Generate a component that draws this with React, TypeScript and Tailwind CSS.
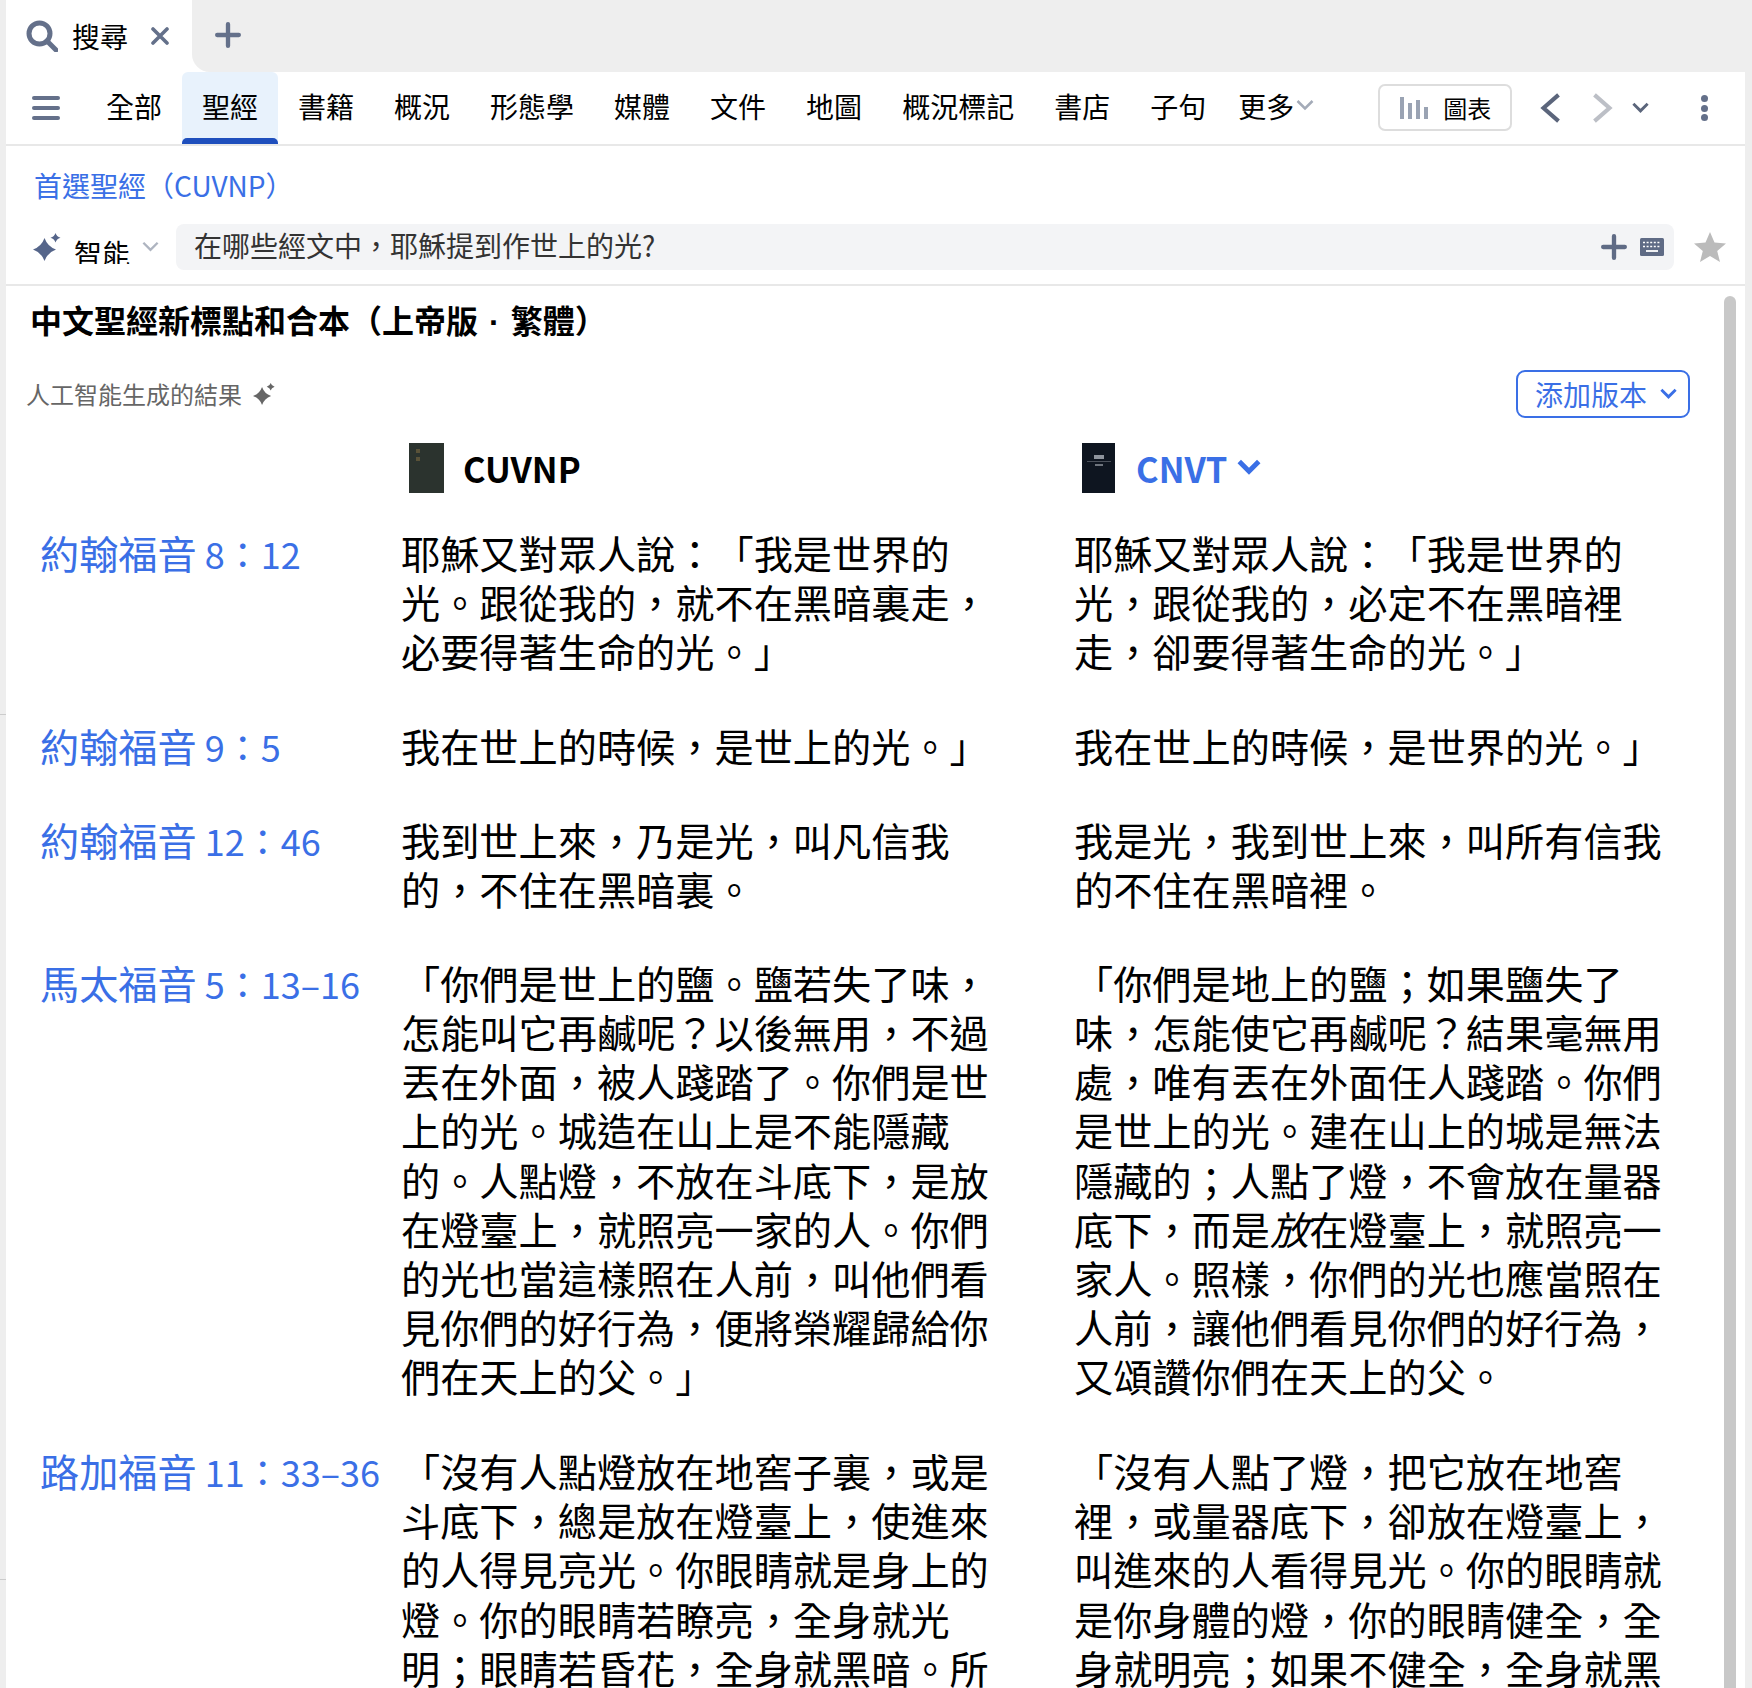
import React from "react";

const FONT = "[font-family:'Noto_Sans_CJK_TC','Noto_Sans',sans-serif] [text-spacing-trim:space-all]";

const Chevron = ({ className, dir = "down", sw = 2 }: { className: string; dir?: "down" | "left" | "right"; sw?: number }) => {
  const d = dir === "down" ? "M2 4 L8 10 L14 4" : dir === "left" ? "M12 1 L4 8 L12 15" : "M4 1 L12 8 L4 15";
  return (
    <svg viewBox="0 0 16 16" className={className} fill="none" stroke="currentColor" strokeWidth={sw}>
      <path d={d} />
    </svg>
  );
};

const Sparkle = ({ className }: { className: string }) => (
  <svg viewBox="0 0 28 28" className={className} fill="currentColor">
    <path d="M11.5 5 Q14.5 13.5 23 16.5 Q14.5 19.5 11.5 28 Q8.5 19.5 0 16.5 Q8.5 13.5 11.5 5Z" />
    <path d="M22.5 0 Q23.5 3.5 27.5 4.8 Q23.5 6 22.5 9.6 Q21.5 6 17.5 4.8 Q21.5 3.5 22.5 0Z" />
  </svg>
);

const Plus = ({ className }: { className: string }) => (
  <svg viewBox="0 0 24 24" className={className} stroke="currentColor" strokeWidth={4} strokeLinecap="round">
    <path d="M12 2V22M2 12H22" />
  </svg>
);

const NAV: [string, boolean?][] = [
  ["全部"],
  ["聖經", true],
  ["書籍"],
  ["概況"],
  ["形態學"],
  ["媒體"],
  ["文件"],
  ["地圖"],
  ["概況標記"],
  ["書店"],
  ["子句"],
];

type Row = { ref: string; num: string; top: string; a: string[]; b: string[] };
const ROWS: Row[] = [
  {
    ref: "約翰福音",
    num: "8：12",
    top: "mt-0",
    a: ["耶穌又對眾人說：「我是世界的", "光。跟從我的，就不在黑暗裏走，", "必要得著生命的光。」"],
    b: ["耶穌又對眾人說：「我是世界的", "光，跟從我的，必定不在黑暗裡", "走，卻要得著生命的光。」"],
  },
  {
    ref: "約翰福音",
    num: "9：5",
    top: "mt-[45px]",
    a: ["我在世上的時候，是世上的光。」"],
    b: ["我在世上的時候，是世界的光。」"],
  },
  {
    ref: "約翰福音",
    num: "12：46",
    top: "mt-[44px]",
    a: ["我到世上來，乃是光，叫凡信我", "的，不住在黑暗裏。"],
    b: ["我是光，我到世上來，叫所有信我", "的不住在黑暗裡。"],
  },
  {
    ref: "馬太福音",
    num: "5：13–16",
    top: "mt-[44.5px]",
    a: [
      "「你們是世上的鹽。鹽若失了味，",
      "怎能叫它再鹹呢？以後無用，不過",
      "丟在外面，被人踐踏了。你們是世",
      "上的光。城造在山上是不能隱藏",
      "的。人點燈，不放在斗底下，是放",
      "在燈臺上，就照亮一家的人。你們",
      "的光也當這樣照在人前，叫他們看",
      "見你們的好行為，便將榮耀歸給你",
      "們在天上的父。」",
    ],
    b: [
      "「你們是地上的鹽；如果鹽失了",
      "味，怎能使它再鹹呢？結果毫無用",
      "處，唯有丟在外面任人踐踏。你們",
      "是世上的光。建在山上的城是無法",
      "隱藏的；人點了燈，不會放在量器",
      "底下，而是*放*在燈臺上，就照亮一",
      "家人。照樣，你們的光也應當照在",
      "人前，讓他們看見你們的好行為，",
      "又頌讚你們在天上的父。",
    ],
  },
  {
    ref: "路加福音",
    num: "11：33–36",
    top: "mt-[45.5px]",
    a: [
      "「沒有人點燈放在地窖子裏，或是",
      "斗底下，總是放在燈臺上，使進來",
      "的人得見亮光。你眼睛就是身上的",
      "燈。你的眼睛若瞭亮，全身就光",
      "明；眼睛若昏花，全身就黑暗。所",
    ],
    b: [
      "「沒有人點了燈，把它放在地窖",
      "裡，或量器底下，卻放在燈臺上，",
      "叫進來的人看得見光。你的眼睛就",
      "是你身體的燈，你的眼睛健全，全",
      "身就明亮；如果不健全，全身就黑",
    ],
  },
];

const Lines = ({ lines }: { lines: string[] }) => (
  <div className="text-[39.2px] leading-[49.2px] text-black whitespace-nowrap">
    {lines.map((l) => (
      <div key={l}>{l.split("*").map((p, i) => (i % 2 ? <em key={i}>{p}</em> : p))}</div>
    ))}
  </div>
);

export default function App() {
  return (
    <div className={`${FONT} relative h-[1688px] w-[1752px] overflow-hidden bg-[#eeeeee] pl-[6px] pr-[7px] text-black`}>
      {/* tab strip */}
      <div className="flex h-[72px] bg-white rounded-tr-[10px]">
        <div className="flex w-[186px] items-center rounded-t-[20px] bg-white pl-[20px]">
          <svg viewBox="0 0 32 32" className="h-[32px] w-[32px] text-[#64708a]" fill="none" stroke="currentColor" strokeWidth={5}>
            <circle cx="13.5" cy="13.5" r="10.5" />
            <path d="M21 21L30 30" strokeLinecap="round" />
          </svg>
          <span className="ml-[14px] text-[28px] leading-none">搜尋</span>
          <svg viewBox="0 0 18 18" className="ml-[23px] h-[18px] w-[18px] text-[#64708a]" stroke="currentColor" strokeWidth={3.6}>
            <path d="M2 2L16 16M16 2L2 16" strokeLinecap="round" />
          </svg>
        </div>
        <div className="flex flex-1 items-center rounded-bl-[18px] bg-[#eeeeee] pl-[23px]">
          <Plus className="-mt-[2px] h-[26px] w-[26px] text-[#64708a]" />
        </div>
      </div>

      {/* nav row */}
      <div className="flex h-[74px] items-stretch border-b-2 border-[#e8e8e8] bg-white">
        <div className="flex w-[80px] items-center pl-[26px]">
          <div className="flex h-[24px] w-[28px] flex-col justify-between">
            <div className="h-[4px] rounded-full bg-[#64708a]" />
            <div className="h-[4px] rounded-full bg-[#64708a]" />
            <div className="h-[4px] rounded-full bg-[#64708a]" />
          </div>
        </div>
        {NAV.map(([t, on]) => (
          <div
            key={t}
            className={`relative flex items-center px-[20px] pb-[5px] text-[28px] leading-none ${on ? "rounded-t-[6px] bg-[#e8f2fc]" : ""}`}
          >
            {t}
            {on && <div className="absolute inset-x-0 bottom-0 h-[6px] rounded-t-[5px] bg-[#1f4fbd]" />}
          </div>
        ))}
        <div className="flex items-center pb-[4px] pl-[12px] text-[28px] leading-none">
          更多
          <Chevron className="ml-[1px] h-[20px] w-[20px] text-[#a4abb8]" />
        </div>
        <div className="ml-[63px] mt-[12px] flex h-[47px] w-[134px] items-center rounded-[7px] border-2 border-[#dddddd] pl-[20px]">
          <svg viewBox="0 0 28 22" className="h-[22px] w-[28px] text-[#9aa3b3]" fill="currentColor">
            <rect x="0" y="0" width="4" height="22" />
            <rect x="8" y="6" width="4" height="16" />
            <rect x="16" y="3" width="4" height="19" />
            <rect x="24" y="10" width="4" height="12" />
          </svg>
          <span className="ml-[15px] text-[24px] leading-none">圖表</span>
        </div>
        <div className="flex items-center">
          <Chevron dir="left" sw={2.2} className="ml-[24px] h-[30px] w-[30px] text-[#5b657b]" />
          <Chevron dir="right" sw={2.2} className="ml-[21px] h-[30px] w-[30px] text-[#bcbfc6]" />
          <Chevron sw={2.4} className="ml-[14px] h-[19px] w-[19px] text-[#5b657b]" />
          <div className="ml-[51px] flex h-[26px] flex-col justify-between">
            <div className="h-[7px] w-[7px] rounded-full bg-[#64708a]" />
            <div className="h-[7px] w-[7px] rounded-full bg-[#64708a]" />
            <div className="h-[7px] w-[7px] rounded-full bg-[#64708a]" />
          </div>
        </div>
      </div>

      {/* search area */}
      <div className="h-[140px] border-b-2 border-[#e8e8e8] bg-white">
        <div className="h-[78px] pl-[28px] pt-[19px] text-[28px] leading-[40px] text-[#3a6fe6]">首選聖經（CUVNP）</div>
        <div className="flex h-[46px] items-center">
          <Sparkle className="ml-[27px] h-[28px] w-[28px] text-[#55658a]" />
          <span className="ml-[13px] mt-[8px] h-[25px] overflow-hidden text-[28px] leading-none">智能</span>
          <Chevron sw={2} className="ml-[11px] h-[19px] w-[19px] text-[#aeb4c0]" />
          <div className="ml-[16px] flex h-[46px] w-[1498px] items-center rounded-[8px] bg-[#f3f4f6] pl-[18px] pr-[10px] text-[28px] leading-none text-[#333]">
            <span className="mb-[4px] flex-1">在哪些經文中，耶穌提到作世上的光?</span>
            <Plus className="mr-[1px] h-[26px] w-[26px] text-[#5f6b85]" />
            <svg viewBox="0 0 24 18" className="ml-[12px] h-[18px] w-[24px]">
              <rect width="24" height="18" rx="1.5" fill="#5f6b85" />
              <path d="M3 4.5H21M3 8.5H21" stroke="#fff" strokeWidth="1.6" strokeDasharray="2 1.6" />
              <path d="M6 13H18" stroke="#fff" strokeWidth="1.8" />
            </svg>
          </div>
          <svg viewBox="0 0 32 30" className="ml-[20px] h-[30px] w-[32px] text-[#bbbbbb]" fill="currentColor">
            <path d="M16 0L20.5 10.6L32 11.5L23.2 19L26 30L16 24L6 30L8.8 19L0 11.5L11.5 10.6Z" />
          </svg>
        </div>
      </div>

      {/* results */}
      <div className="relative bg-white pl-[26px]">
        <div className="absolute bottom-0 right-[9px] top-[10px] w-[12px] rounded-t-full bg-[#c8c8c8]" />
        <h1 className="-ml-[2px] pt-[13px] text-[32px] font-bold leading-[40px]">
          中文聖經新標點和合本（上帝版
          <span className="px-[11px] leading-none [font-family:'Liberation_Sans',sans-serif]">·</span>
          繁體）
        </h1>
        <div className="mt-[31px] flex h-[48px] items-center pr-[55px]">
          <span className="-ml-[6px] text-[24px] leading-none text-[#666666]">人工智能生成的結果</span>
          <Sparkle className="ml-[11px] h-[22px] w-[22px] text-[#666666]" />
          <div className="ml-auto flex h-[48px] w-[174px] items-center rounded-[9px] border-2 border-[#3a6fe6] pl-[17px] text-[28px] leading-none text-[#3a6fe6]">
            添加版本
            <Chevron sw={2.4} className="ml-[12px] h-[19px] w-[19px]" />
          </div>
        </div>

        <div className="grid grid-cols-[362px_673px_1fr] pl-[8px] pt-[25px]">
          <div />
          <div className="flex h-[50px] items-center">
            <div className="ml-[7px] h-[50px] w-[35px] bg-[#2b332e] pl-[7px] pt-[6px]">
              <div className="h-[4px] w-[4px] bg-[#5a5238]" />
              <div className="mt-[4px] h-[4px] w-[4px] bg-[#5a5238]" />
            </div>
            <span className="ml-[19px] text-[34.5px] font-bold leading-none">CUVNP</span>
          </div>
          <div className="flex h-[50px] items-center">
            <div className="ml-[7px] flex h-[50px] w-[33px] flex-col items-center bg-[#0e1520] pt-[12px]">
              <div className="h-[4px] w-[10px] bg-[#8d939c]" />
              <div className="mt-[2px] h-[1px] w-[24px] bg-[#4a505a]" />
              <div className="mt-[2px] h-[2px] w-[8px] bg-[#6d737c]" />
            </div>
            <span className="ml-[21px] text-[34.5px] font-bold leading-none text-[#3a6fe6]">CNVT</span>
            <Chevron sw={3} className="ml-[9px] h-[26px] w-[26px] text-[#3a6fe6]" />
          </div>
        </div>

        <div className="mt-[35px] flex flex-col">
          {ROWS.map((r) => (
            <div key={r.ref + r.num} className={`grid grid-cols-[361px_673px_1fr] pl-[8px] ${r.top}`}>
              <div className="whitespace-nowrap text-[39.2px] leading-[49.2px] text-[#3a6fe6]">
                {r.ref}
                <span className="ml-[8px] text-[36px]">{r.num}</span>
              </div>
              <Lines lines={r.a} />
              <Lines lines={r.b} />
            </div>
          ))}
        </div>
      </div>

      {/* traces of the panel behind, in the left margin */}
      <div className="absolute left-0 top-[714px] h-[1px] w-[6px] bg-[#cccccc]" />
      <div className="absolute left-0 top-[1579px] h-[1px] w-[6px] bg-[#cccccc]" />
    </div>
  );
}
